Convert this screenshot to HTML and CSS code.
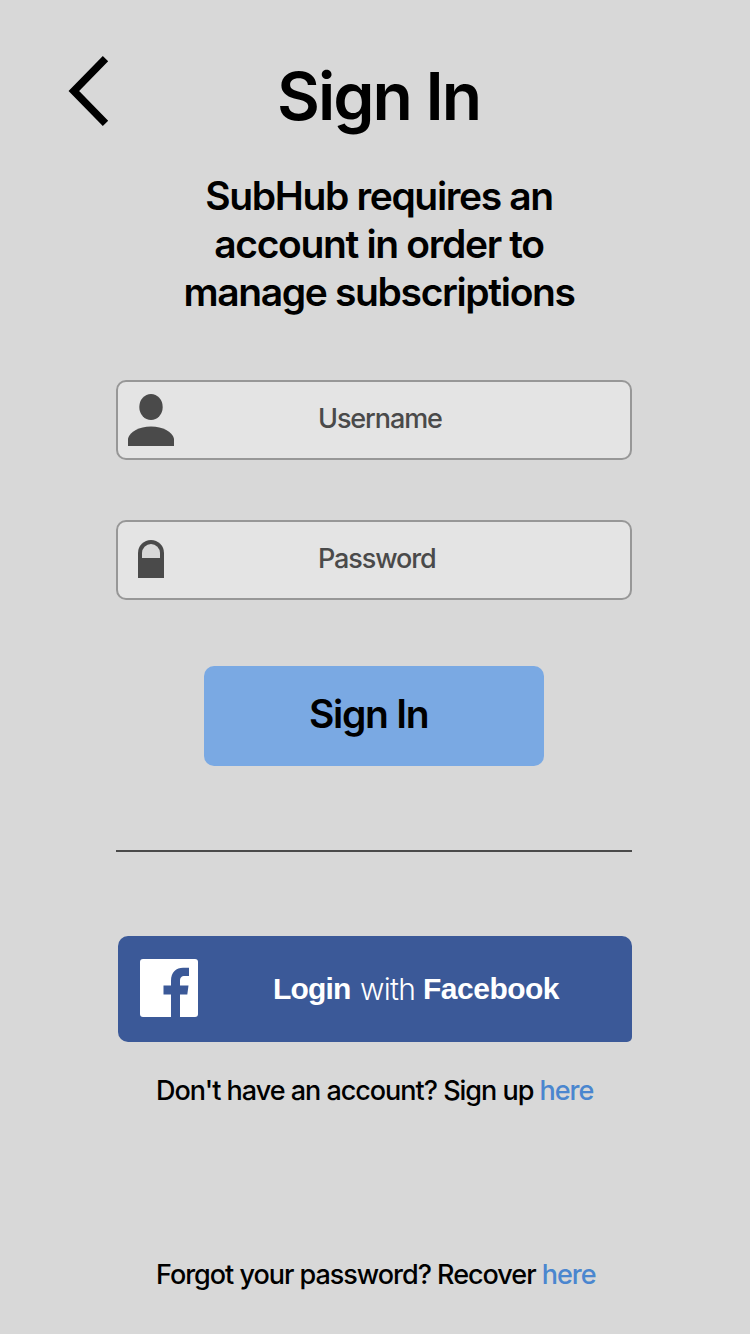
FILE: index.html
```html
<!DOCTYPE html>
<html lang="en">
<head>
<meta charset="utf-8">
<title>Sign In</title>
<link rel="stylesheet" href="styles.css">
</head>
<body>
<main class="screen">
  <header class="header">
    <a class="back" aria-label="Back">
      <svg width="41" height="70" viewBox="0 0 41 70"><path d="M37.500 2.700 5.800 35 37.500 67.300" fill="none" stroke="#000" stroke-width="7.500"/></svg>
    </a>
    <h1 class="title">Sign In</h1>
  </header>
  <p class="intro"><span>SubHub requires an</span><br><span>account in order to</span><br><span>manage subscriptions</span></p>
  <form class="form">
    <label class="field">
      <svg class="user-icon" width="46" height="52" viewBox="0 0 46 52" fill="#4a4a4a"><ellipse cx="23" cy="13" rx="11.700" ry="13"/><path d="M0 52V44.500C2 37.500 11 32.500 23 32.500S44 37.500 46 44.500V52Z"/></svg>
      <span class="placeholder username">Username</span>
    </label>
    <label class="field">
      <svg class="lock-icon" width="26" height="38" viewBox="0 0 26 38"><path d="M0 38V13a13 13 0 0 1 26 0V38Z" fill="#4a4a4a"/><path d="M4 18V13a9 9 0 0 1 18 0V18Z" fill="#d8d8d8"/></svg>
      <span class="placeholder password">Password</span>
    </label>
    <button class="submit" type="button"><span>Sign In</span></button>
  </form>
  <hr class="divider">
  <a class="facebook">
    <svg class="facebook-logo" width="58" height="58" viewBox="0 0 58 58"><rect width="58" height="58" rx="3" fill="#fff"/><path d="M31 58V35.500H23.500V26.500H31V22C31 13 36.500 8.800 43 8.800H49V17H45C41 17 40 19 40 22V26.500H48.500L47.300 35.500H40V58Z" fill="#3b5998"/></svg>
    <span class="fb-login">Login</span><span class="fb-with">with</span><span class="fb-name">Facebook</span>
  </a>
  <p class="note signup">Don't have an account? Sign up <a class="link">here</a></p>
  <p class="note recover">Forgot your password? Recover <a class="link">here</a></p>
</main>
</body>
</html>
```
FILE: styles.css
```css
* { box-sizing: border-box; }
body {
  margin: 0;
  background: #d8d8d8;
  color: #000;
  font-family: Inter, "Liberation Sans", sans-serif;
}
svg { display: block; flex: none; }
.screen {
  display: flex;
  flex-direction: column;
  width: 750px;
  height: 1334px;
  padding-top: 56px;
}
.header { display: flex; height: 80px; padding-left: 68px; }
.back { width: 209px; }
.title {
  margin: 0;
  font-size: 66px;
  font-weight: 600;
  line-height: 80px;
  letter-spacing: -2px;
  white-space: nowrap;
}
.intro {
  width: 758px;
  margin: 36px 0 0;
  font-size: 39px;
  font-weight: 600;
  line-height: 48px;
  letter-spacing: -1.35px;
  text-align: center;
}
.form { display: flex; flex-direction: column; margin: 64px 118px 0 116px; }
.field {
  display: flex;
  align-items: center;
  height: 80px;
  margin-bottom: 60px;
  border: 2px solid #979797;
  border-radius: 10px;
  background: #e4e4e4;
}
.user-icon { margin: 0 144px 0 10px; }
.lock-icon { margin: 0 154px 2px 20px; }
.placeholder {
  padding-bottom: 4px;
  color: #4a4a4a;
  font-size: 27px;
  font-weight: 500;
  letter-spacing: -1.1px;
}
.submit {
  display: flex;
  width: 340px;
  height: 100px;
  margin: 6px 0 0 88px;
  padding: 0 0 6px 105px;
  align-items: center;
  border: 0;
  border-radius: 10px;
  background: #7aa9e3;
  color: #000;
  font: 600 39px Inter, sans-serif;
  letter-spacing: -1.3px;
}
.divider { width: 516px; height: 2px; margin: 84px 0 0 116px; border: 0; background: #4a4a4a; }
.facebook {
  display: flex;
  align-items: center;
  width: 514px;
  height: 106px;
  margin: 84px 0 0 118px;
  padding-left: 22px;
  border-radius: 10px 10px 5px 10px;
  background: #3b5998;
  color: #fff;
  font-family: "Liberation Sans", Arial, sans-serif;
  font-size: 30px;
  font-weight: 700;
  letter-spacing: -0.5px;
}
.facebook-logo { margin-bottom: 2px; }
.fb-login { width: 87px; margin-left: 75px; letter-spacing: -0.8px; }
.fb-with { width: 63px; font-family: Inter, sans-serif; font-size: 30px; font-weight: 300; letter-spacing: -0.7px; }
.note {
  margin: 0 0 0 156px;
  font-size: 27px;
  font-weight: 500;
  line-height: 40px;
  letter-spacing: -1.02px;
  white-space: nowrap;
}
.signup { margin-top: 29px; }
.recover { margin-top: 144px; }
.link { color: #4a86cf; }
```
